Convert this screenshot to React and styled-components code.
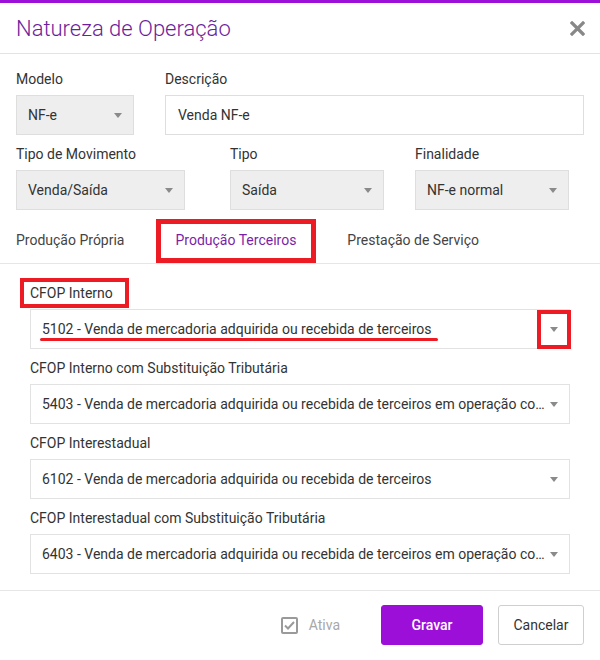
import React from 'react';
import styled, { createGlobalStyle } from 'styled-components';

const GlobalStyle = createGlobalStyle`
  html, body {
    margin: 0;
    padding: 0;
    background: #fff;
  }
  body {
    font-family: Roboto, "Liberation Sans", Arial, sans-serif;
    color: #333;
  }
  * {
    box-sizing: border-box;
  }
`;

const RED = '#ed1c24';
const PURPLE = '#9c0fd8';

const Modal = styled.section`
  width: 600px;
  min-height: 660px;
  background: #fff;
  border-top: 3px solid ${PURPLE};
  display: flex;
  flex-direction: column;

  & > * {
    flex-shrink: 0;
  }
`;

const Header = styled.header`
  height: 51px;
  display: flex;
  align-items: center;
  justify-content: space-between;
  padding: 0 14px 0 16px;
  border-bottom: 1px solid #e3e3e3;
`;

const Title = styled.h1`
  margin: 0;
  font-size: 22px;
  font-weight: 300;
  color: #6c1e9c;
  padding-top: 1px;
`;

const CloseButton = styled.button`
  border: none;
  background: none;
  padding: 0;
  width: 18px;
  height: 18px;
  display: flex;
  align-items: center;
  justify-content: center;
  cursor: pointer;
`;

const Body = styled.div`
  padding: 16px 16px 0 16px;
`;

const Row = styled.div`
  display: flex;
  margin-bottom: ${p => p.$mb || '10px'};
`;

const Field = styled.div`
  width: ${p => p.$w};
  flex: ${p => (p.$grow ? '1' : 'none')};
  display: flex;
  flex-direction: column;
`;

const Label = styled.label`
  position: relative;
  align-self: flex-start;
  font-size: 14px;
  line-height: 18px;
  color: #333;
  margin-bottom: 7px;

  ${p =>
    p.$marked &&
    `
    &::before {
      content: '';
      position: absolute;
      top: -6px;
      bottom: -6px;
      left: -10px;
      right: -16px;
      border: 4px solid ${RED};
    }
  `}
`;

const Select = styled.div`
  position: relative;
  width: ${p => p.$w || '100%'};
  height: 40px;
  display: flex;
  align-items: center;
  padding: 0 22px 0 11px;
  font-size: 14px;
  color: #333;
  background: ${p => (p.$gray ? '#eeeeee' : '#fff')};
  border: 1px solid ${p => (p.$gray ? '#dedede' : '#e2e2e2')};
`;

const Value = styled.span`
  white-space: nowrap;
  overflow: hidden;
  text-overflow: ellipsis;
`;

const Underline = styled.span`
  position: absolute;
  left: 9px;
  width: 398px;
  bottom: 7px;
  height: 3px;
  border-radius: 2px;
  background: ${RED};
`;

const Caret = styled.span`
  position: absolute;
  right: 11px;
  top: 50%;
  margin-top: -2px;
  width: 0;
  height: 0;
  border-left: 4px solid transparent;
  border-right: 4px solid transparent;
  border-top: 5px solid #8a8a8a;
`;

const CaretMark = styled.span`
  position: absolute;
  right: -2px;
  top: 0;
  bottom: -1px;
  width: 34px;
  border: 4px solid ${RED};
`;

const Input = styled.div`
  height: 40px;
  display: flex;
  align-items: center;
  padding: 0 12px;
  font-size: 14px;
  color: #333;
  border: 1px solid #dedede;
`;

const TabBar = styled.nav`
  display: flex;
  height: 45px;
  border-bottom: 1px solid #e6e6e6;
`;

const Tab = styled.div`
  display: flex;
  align-items: center;
  margin-right: 11px;
  font-size: 14px;
  color: ${p => (p.$active ? '#7a1fa8' : '#444')};
  border: ${p => (p.$active ? `5px solid ${RED}` : 'none')};
  padding-left: ${p => (p.$first ? '16px' : p.$active ? '15px' : '20px')};
  padding-right: ${p => (p.$active ? '15px' : '20px')};
  padding-bottom: 2px;
  height: 44px;
  cursor: pointer;
`;

const Panel = styled.div`
  padding: 20px 30px 6px 30px;
  border-bottom: 1px solid #e6e6e6;
`;

const PanelField = styled.div`
  display: flex;
  flex-direction: column;
  margin-bottom: 10px;
`;

const Footer = styled.footer`
  display: flex;
  align-items: center;
  justify-content: flex-end;
  padding: 14px 16px;
`;

const Check = styled.label`
  display: flex;
  align-items: center;
  gap: 11px;
  font-size: 14px;
  color: #a8a8a8;
  margin-right: 41px;
`;

const Box = styled.span`
  width: 17px;
  height: 17px;
  border: 2px solid #9a9a9a;
  border-radius: 2px;
  display: flex;
  align-items: center;
  justify-content: center;
`;

const Button = styled.button`
  height: 40px;
  width: ${p => p.$w};
  font-family: inherit;
  font-size: 14px;
  border-radius: 3px;
  cursor: pointer;
  margin-left: ${p => p.$ml || '0'};
  background: ${p => (p.$primary ? PURPLE : '#fff')};
  color: ${p => (p.$primary ? '#fff' : '#333')};
  font-weight: ${p => (p.$primary ? 500 : 400)};
  border: 1px solid ${p => (p.$primary ? PURPLE : '#cfcfcf')};
`;

const cfops = [
  {
    label: 'CFOP Interno',
    value: '5102 - Venda de mercadoria adquirida ou recebida de terceiros',
    marked: true,
  },
  {
    label: 'CFOP Interno com Substituição Tributária',
    value:
      '5403 - Venda de mercadoria adquirida ou recebida de terceiros em operação com mercadoria sujeita ao regime de substituição tributária',
  },
  {
    label: 'CFOP Interestadual',
    value: '6102 - Venda de mercadoria adquirida ou recebida de terceiros',
  },
  {
    label: 'CFOP Interestadual com Substituição Tributária',
    value:
      '6403 - Venda de mercadoria adquirida ou recebida de terceiros em operação com mercadoria sujeita ao regime de substituição tributária',
  },
];

const App = () => (
  <>
    <GlobalStyle />
    <Modal>
      <Header>
        <Title>Natureza de Operação</Title>
        <CloseButton aria-label="Fechar">
          <svg width="15" height="15" viewBox="0 0 15 15">
            <path d="M2 2 L13 13 M13 2 L2 13" stroke="#888" strokeWidth="3.2" strokeLinecap="square" />
          </svg>
        </CloseButton>
      </Header>

      <Body>
        <Row>
          <Field $w="149px">
            <Label>Modelo</Label>
            <Select $gray $w="118px">
              <Value>NF-e</Value>
              <Caret />
            </Select>
          </Field>
          <Field $grow>
            <Label>Descrição</Label>
            <Input>Venda NF-e</Input>
          </Field>
        </Row>

        <Row $mb="9px">
          <Field $w="214px">
            <Label>Tipo de Movimento</Label>
            <Select $gray $w="169px">
              <Value>Venda/Saída</Value>
              <Caret />
            </Select>
          </Field>
          <Field $w="185px">
            <Label>Tipo</Label>
            <Select $gray $w="154px">
              <Value>Saída</Value>
              <Caret />
            </Select>
          </Field>
          <Field $w="154px">
            <Label>Finalidade</Label>
            <Select $gray $w="154px">
              <Value>NF-e normal</Value>
              <Caret />
            </Select>
          </Field>
        </Row>
      </Body>

      <TabBar>
        <Tab $first>Produção Própria</Tab>
        <Tab $active>Produção Terceiros</Tab>
        <Tab>Prestação de Serviço</Tab>
      </TabBar>

      <Panel>
        {cfops.map(c => (
          <PanelField key={c.label}>
            <Label $marked={c.marked}>{c.label}</Label>
            <Select>
              <Value>{c.value}</Value>
              {c.marked && <Underline />}
              <Caret />
              {c.marked && <CaretMark />}
            </Select>
          </PanelField>
        ))}
      </Panel>

      <Footer>
        <Check>
          <Box>
            <svg width="11" height="9" viewBox="0 0 11 9">
              <path d="M1 4.5 L4 7.5 L10 1" fill="none" stroke="#9a9a9a" strokeWidth="2" />
            </svg>
          </Box>
          Ativa
        </Check>
        <Button $primary $w="102px">Gravar</Button>
        <Button $w="86px" $ml="15px">Cancelar</Button>
      </Footer>
    </Modal>
  </>
);

export default App;
